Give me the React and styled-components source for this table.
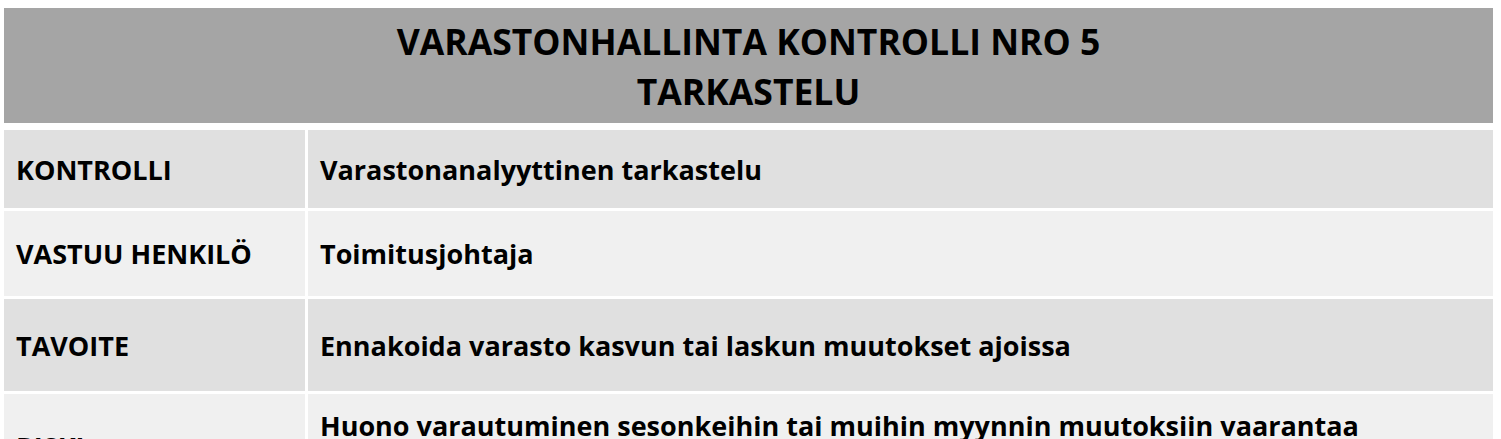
import React from "react";
import styled, { createGlobalStyle } from "styled-components";

const Global = createGlobalStyle`
  html, body { margin: 0; padding: 0; background: #ffffff; }
  body { font-family: "Open Sans", Lato, sans-serif; color: #000; }
`;

const Page = styled.div`
  width: 1501px;
  height: 439px;
  overflow: hidden;
  padding: 8px 8px 0 4px;
  box-sizing: border-box;
`;

const Table = styled.div`
  display: flex;
  flex-direction: column;
  gap: 3px;
  width: 1489px;
`;

const Header = styled.div`
  height: 115px;
  margin-bottom: 4px;
  background: #a5a5a5;
  display: flex;
  flex-direction: column;
  align-items: center;
  justify-content: center;
  font-weight: 700;
  font-size: 35.5px;
  line-height: 50px;
  text-align: center;
`;

const Row = styled.div`
  display: grid;
  grid-template-columns: 301px 1fr;
  column-gap: 3px;
  min-height: ${(p) => p.$h}px;
`;

const Cell = styled.div`
  background: ${(p) => (p.$shade === "dark" ? "#e0e0e0" : "#f0f0f0")};
  display: flex;
  align-items: center;
  padding: ${(p) => p.$pad || "0"} 12px;
  font-weight: 700;
  font-size: 27px;
  line-height: 43px;
`;

const rows = [
  { label: "KONTROLLI", value: "Varastonanalyyttinen tarkastelu", h: 78, shade: "dark" },
  { label: "VASTUU HENKILÖ", value: "Toimitusjohtaja", h: 85, shade: "light" },
  { label: "TAVOITE", value: "Ennakoida varasto kasvun tai laskun muutokset ajoissa", h: 92, shade: "dark" },
  {
    label: "RISKI",
    value: (
      <>
        Huono varautuminen sesonkeihin tai muihin myynnin muutoksiin vaarantaa
        <br />
        yrityksen kannattavuuden
      </>
    ),
    h: 105,
    shade: "light",
    pad: "9px",
  },
];

export default function App() {
  return (
    <>
      <Global />
      <Page>
        <Table>
          <Header>
            <div>VARASTONHALLINTA KONTROLLI NRO 5</div>
            <div>TARKASTELU</div>
          </Header>
          {rows.map((r) => (
            <Row key={r.label} $h={r.h}>
              <Cell $shade={r.shade}>{r.label}</Cell>
              <Cell $shade={r.shade} $pad={r.pad}>
                <div>{r.value}</div>
              </Cell>
            </Row>
          ))}
        </Table>
      </Page>
    </>
  );
}
